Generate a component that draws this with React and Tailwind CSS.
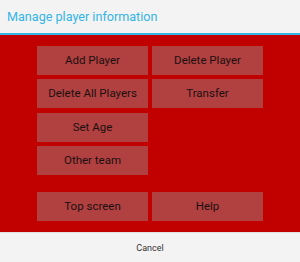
import React from 'react';

const Btn = ({ label }) => (
  <button className="w-[111px] h-[29px] bg-[#b14040] text-[#1a1010] text-[11.5px] leading-none flex items-center justify-center pt-[1px]">
    {label}
  </button>
);

const Empty = () => <div className="w-[111px] h-[29px]" />;

export default function App() {
  const font = { fontFamily: 'Roboto, "Noto Sans", sans-serif' };
  return (
    <div className="w-[300px] h-[262px] flex flex-col bg-[#f3f3f3]" style={font}>
      {/* Titelleiste */}
      <div className="h-[33px] flex items-center px-[7px] pt-[1px] text-[12.6px] text-[#33b5e5]">
        Manage player information
      </div>
      <div className="h-[2px] bg-[#33b5e5]" />

      {/* Button-Bereich */}
      <div className="h-[197px] bg-[#c10000] flex flex-col items-center pt-[11px]">
        <div className="flex gap-[4px]">
          <Btn label="Add Player" />
          <Btn label="Delete Player" />
        </div>
        <div className="flex gap-[4px] mt-[4px]">
          <Btn label="Delete All Players" />
          <Btn label="Transfer" />
        </div>
        <div className="flex gap-[4px] mt-[5px]">
          <Btn label="Set Age" />
          <Empty />
        </div>
        <div className="flex gap-[4px] mt-[4px]">
          <Btn label="Other team" />
          <Empty />
        </div>
        <div className="flex gap-[4px] mt-[17px]">
          <Btn label="Top screen" />
          <Btn label="Help" />
        </div>
      </div>

      {/* Abbrechen */}
      <div className="flex-1 flex items-center justify-center pt-[3px] text-[9px] text-[#333] border-t border-[#e0e0e0]">
        Cancel
      </div>
    </div>
  );
}
